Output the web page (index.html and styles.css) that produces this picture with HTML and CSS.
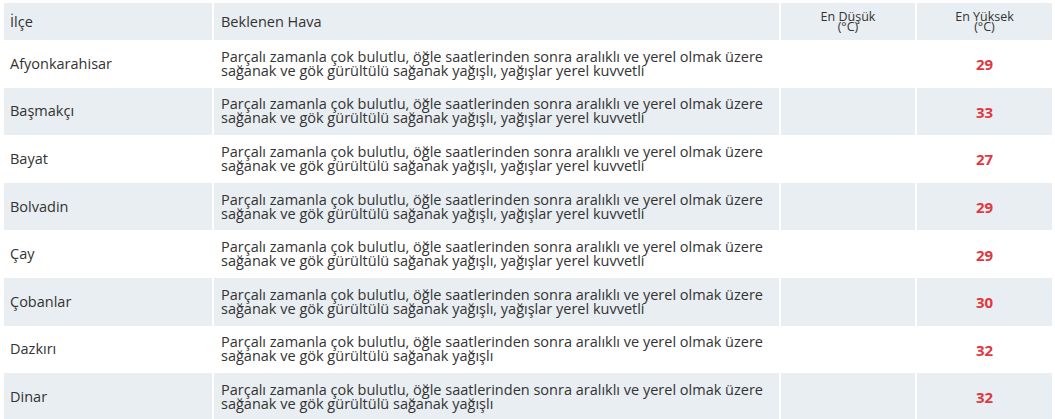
FILE: index.html
```html
<!DOCTYPE html>
<html lang="tr">
<head>
<meta charset="utf-8">
<link rel="stylesheet" href="styles.css">
</head>
<body>
<table class="forecast">
  <colgroup>
    <col class="c-name"><col class="c-desc"><col class="c-min"><col class="c-max">
  </colgroup>
  <thead>
    <tr>
      <th class="left">İlçe</th>
      <th class="left">Beklenen Hava</th>
      <th class="small">En Düşük<br>(°C)</th>
      <th class="small">En Yüksek<br>(°C)</th>
    </tr>
  </thead>
  <tbody>
    <tr><td>Afyonkarahisar</td><td class="desc">Parçalı zamanla çok bulutlu, öğle saatlerinden sonra aralıklı ve yerel olmak üzere<br>sağanak ve gök gürültülü sağanak yağışlı, yağışlar yerel kuvvetli</td><td></td><td class="max">29</td></tr>
    <tr><td>Başmakçı</td><td class="desc">Parçalı zamanla çok bulutlu, öğle saatlerinden sonra aralıklı ve yerel olmak üzere<br>sağanak ve gök gürültülü sağanak yağışlı, yağışlar yerel kuvvetli</td><td></td><td class="max">33</td></tr>
    <tr><td>Bayat</td><td class="desc">Parçalı zamanla çok bulutlu, öğle saatlerinden sonra aralıklı ve yerel olmak üzere<br>sağanak ve gök gürültülü sağanak yağışlı, yağışlar yerel kuvvetli</td><td></td><td class="max">27</td></tr>
    <tr><td>Bolvadin</td><td class="desc">Parçalı zamanla çok bulutlu, öğle saatlerinden sonra aralıklı ve yerel olmak üzere<br>sağanak ve gök gürültülü sağanak yağışlı, yağışlar yerel kuvvetli</td><td></td><td class="max">29</td></tr>
    <tr><td>Çay</td><td class="desc">Parçalı zamanla çok bulutlu, öğle saatlerinden sonra aralıklı ve yerel olmak üzere<br>sağanak ve gök gürültülü sağanak yağışlı, yağışlar yerel kuvvetli</td><td></td><td class="max">29</td></tr>
    <tr><td>Çobanlar</td><td class="desc">Parçalı zamanla çok bulutlu, öğle saatlerinden sonra aralıklı ve yerel olmak üzere<br>sağanak ve gök gürültülü sağanak yağışlı, yağışlar yerel kuvvetli</td><td></td><td class="max">30</td></tr>
    <tr><td>Dazkırı</td><td class="desc">Parçalı zamanla çok bulutlu, öğle saatlerinden sonra aralıklı ve yerel olmak üzere<br>sağanak ve gök gürültülü sağanak yağışlı</td><td></td><td class="max">32</td></tr>
    <tr><td>Dinar</td><td class="desc">Parçalı zamanla çok bulutlu, öğle saatlerinden sonra aralıklı ve yerel olmak üzere<br>sağanak ve gök gürültülü sağanak yağışlı</td><td></td><td class="max">32</td></tr>
  </tbody>
</table>
</body>
</html>
```
FILE: styles.css
```css
html, body {
  margin: 0;
  padding: 0;
  background: #fff;
}
body {
  padding: 3px 0 0 4px;
  font-family: "Open Sans", "DejaVu Sans", sans-serif;
  color: #333;
}
.forecast {
  table-layout: fixed;
  border-collapse: separate;
  border-spacing: 0;
  width: 1048px;
  font-size: 14.5px;
}
.c-name { width: 208px; }
.c-desc { width: 567px; }
.c-min { width: 136px; }
.c-max { width: 137px; }

.forecast th,
.forecast td {
  padding: 0 7px;
  vertical-align: middle;
  border-left: 2px solid #fff;
}
.forecast th:first-child,
.forecast td:first-child {
  border-left: 0;
  padding-left: 6px;
}
.forecast thead th {
  background: #e8eef1;
  height: 37px;
  box-sizing: border-box;
  font-weight: normal;
  line-height: 16px;
}
.forecast th.left { text-align: left; }
.forecast th.small {
  text-align: center;
  font-size: 12.5px;
  line-height: 10px;
  padding-top: 1px;
}
.forecast td {
  height: 47.6px;
  box-sizing: border-box;
  line-height: 14px;
}
.forecast tbody tr:nth-child(even) td {
  background: #e8eef1;
}
.forecast td.max {
  text-align: center;
  font-weight: bold;
  color: #e3363f;
  font-size: 15px;
  padding-top: 1px;
}
```
